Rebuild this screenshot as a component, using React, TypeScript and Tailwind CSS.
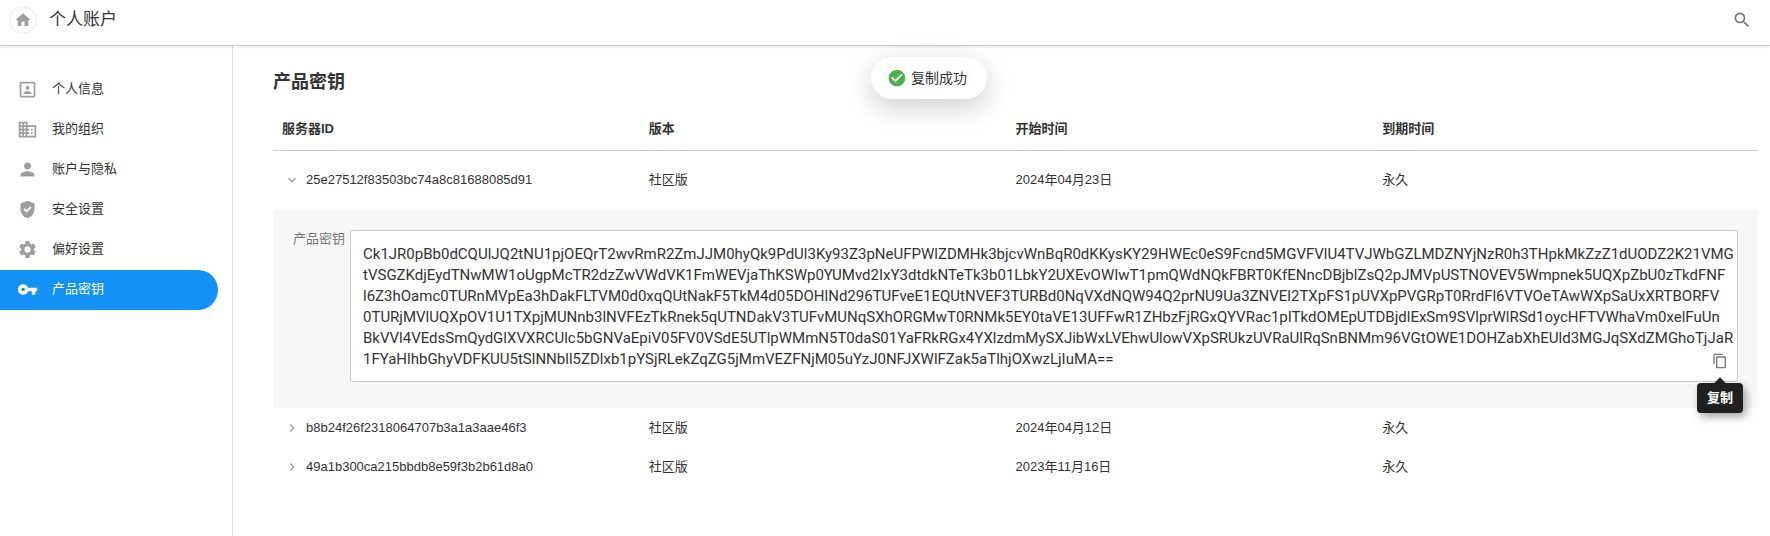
import { Fragment, useState } from "react";
import type { IconType } from "react-icons";
import {
  MdBusiness,
  MdCheckCircle,
  MdContentCopy,
  MdGppGood,
  MdHome,
  MdKeyboardArrowDown,
  MdKeyboardArrowRight,
  MdPerson,
  MdPortrait,
  MdSearch,
  MdSettings,
  MdVpnKey,
} from "react-icons/md";

type NavItem = { label: string; icon: IconType };

const navItems: NavItem[] = [
  { label: "个人信息", icon: MdPortrait },
  { label: "我的组织", icon: MdBusiness },
  { label: "账户与隐私", icon: MdPerson },
  { label: "安全设置", icon: MdGppGood },
  { label: "偏好设置", icon: MdSettings },
  { label: "产品密钥", icon: MdVpnKey },
];

const licenseKey = [
  "Ck1JR0pBb0dCQUlJQ2tNU1pjOEQrT2wvRmR2ZmJJM0hyQk9PdUl3Ky93Z3pNeUFPWlZDMHk3bjcvWnBqR0dKKysKY29HWEc0eS9Fcnd5MGVFVlU4TVJWbGZLMDZNYjNzR0h3THpkMkZzZ1dUODZ2K21VMG",
  "tVSGZKdjEydTNwMW1oUgpMcTR2dzZwVWdVK1FmWEVjaThKSWp0YUMvd2IxY3dtdkNTeTk3b01LbkY2UXEvOWIwT1pmQWdNQkFBRT0KfENncDBjblZsQ2pJMVpUSTNOVEV5Wmpnek5UQXpZbU0zTkdFNF",
  "l6Z3hOamc0TURnMVpEa3hDakFLTVM0d0xqQUtNakF5TkM4d05DOHlNd296TUFveE1EQUtNVEF3TURBd0NqVXdNQW94Q2prNU9Ua3ZNVEl2TXpFS1pUVXpPVGRpT0RrdFl6VTVOeTAwWXpSaUxXRTBORFV",
  "0TURjMVlUQXpOV1U1TXpjMUNnb3lNVFEzTkRnek5qUTNDakV3TUFvMUNqSXhORGMwT0RNMk5EY0taVE13UFFwR1ZHbzFjRGxQYVRac1pITkdOMEpUTDBjdlExSm9SVlprWlRSd1oycHFTVWhaVm0xelFuUn",
  "BkVVl4VEdsSmQydGlXVXRCUlc5bGNVaEpiV05FV0VSdE5UTlpWMmN5T0daS01YaFRkRGx4YXlzdmMySXJibWxLVEhwUlowVXpSRUkzUVRaUlRqSnBNMm96VGtOWE1DOHZabXhEUld3MGJqSXdZMGhoTjJaR",
  "1FYaHlhbGhyVDFKUU5tSlNNbll5ZDlxb1pYSjRLekZqZG5jMmVEZFNjM05uYzJ0NFJXWlFZak5aTlhjOXwzLjIuMA==",
].join("\n");

const servers = [
  { id: "25e27512f83503bc74a8c81688085d91", edition: "社区版", start: "2024年04月23日", end: "永久" },
  { id: "b8b24f26f2318064707b3a1a3aae46f3", edition: "社区版", start: "2024年04月12日", end: "永久" },
  { id: "49a1b300ca215bbdb8e59f3b2b61d8a0", edition: "社区版", start: "2023年11月16日", end: "永久" },
];

function Header() {
  return (
    <header className="relative flex h-[46px] items-center border-b border-[#d0d0d0] pr-2 pb-[5px] pl-[9px] shadow-[0_1px_2px_rgba(0,0,0,0.12)]">
      <a
        href="#home"
        aria-label="首页"
        className="flex size-7 items-center justify-center rounded-full border border-[#eaeaea] text-[#9e9e9e]"
      >
        <MdHome size={18} />
      </a>
      <h1 className="ml-3 text-[17px] leading-6">个人账户</h1>
      <button type="button" aria-label="搜索" className="mr-[10px] ml-auto text-[#757575]">
        <MdSearch size={20} />
      </button>
    </header>
  );
}

function Sidebar() {
  return (
    <nav className="w-[233px] shrink-0 border-r border-[#e0e0e0] pt-6 pr-[14px]">
      {navItems.map(({ label, icon: Icon }) => {
        const active = label === "产品密钥";
        return (
          <a
            key={label}
            href="#account"
            aria-current={active ? "page" : undefined}
            className={
              active
                ? "flex h-10 items-center gap-[14px] rounded-r-full bg-[#1292f7] pb-[2px] pl-[17px] text-white"
                : "flex h-10 items-center gap-[14px] pb-[2px] pl-[17px]"
            }
          >
            <Icon size={21} className={active ? "text-white" : "text-[#9e9e9e]"} />
            {label}
          </a>
        );
      })}
    </nav>
  );
}

function KeyPanel() {
  return (
    <div className="flex items-start gap-[5px] bg-[#f7f7f7] px-5 pt-5 pb-[26px]">
      <label htmlFor="license-key" className="shrink-0 leading-[18px] text-[#757575]">
        产品密钥
      </label>
      <div className="relative flex min-w-0 flex-1">
        <textarea
          id="license-key"
          readOnly
          rows={6}
          wrap="off"
          value={licenseKey}
          className="w-full resize-none overflow-hidden rounded-[3px] border border-[#cccccc] bg-white px-3 pt-[13px] pb-[11px] font-['Roboto',sans-serif] text-[15px] leading-[21px] text-[#333333] outline-none"
        />
        <div className="absolute right-[9px] bottom-[12px] flex size-[18px] items-center justify-center">
          <button type="button" aria-label="复制密钥" className="text-[#757575]">
            <MdContentCopy size={16} />
          </button>
          <div
            role="tooltip"
            className="absolute top-full left-1/2 mt-[13px] -translate-x-1/2 rounded bg-[#212121] px-[10px] py-[6px] leading-[18px] font-bold whitespace-nowrap text-white shadow-[3px_4px_8px_rgba(0,0,0,0.35)]"
          >
            <span className="absolute -top-1 left-1/2 size-2 -translate-x-1/2 rotate-45 bg-[#212121]" />
            <span className="relative">复制</span>
          </div>
        </div>
      </div>
    </div>
  );
}

function ServerTable() {
  const [openId, setOpenId] = useState<string | null>(servers[0].id);
  return (
    <table className="mt-3 w-full table-fixed border-collapse text-left">
      <colgroup>
        <col className="w-[25.3%]" />
        <col className="w-[24.7%]" />
        <col className="w-[24.7%]" />
        <col />
      </colgroup>
      <thead>
        <tr className="h-11 border-b border-[#cccccc]">
          <th className="pt-[2px] pl-[9px] font-bold">服务器ID</th>
          <th className="pt-[2px] font-bold">版本</th>
          <th className="pt-[2px] font-bold">开始时间</th>
          <th className="pt-[2px] font-bold">到期时间</th>
        </tr>
      </thead>
      <tbody>
        {servers.map((server) => {
          const open = server.id === openId;
          const Chevron = open ? MdKeyboardArrowDown : MdKeyboardArrowRight;
          return (
            <Fragment key={server.id}>
              <tr className={open ? "h-[60px]" : "h-[39px]"}>
                <td className="pl-[11px]">
                  <button
                    type="button"
                    aria-expanded={open}
                    onClick={() => setOpenId(open ? null : server.id)}
                    className="flex items-center gap-[6px]"
                  >
                    <Chevron size={16} className="text-[#9e9e9e]" />
                    {server.id}
                  </button>
                </td>
                <td>{server.edition}</td>
                <td>{server.start}</td>
                <td>{server.end}</td>
              </tr>
              {open && (
                <tr>
                  <td colSpan={4}>
                    <KeyPanel />
                  </td>
                </tr>
              )}
            </Fragment>
          );
        })}
      </tbody>
    </table>
  );
}

export default function App() {
  return (
    <div className="relative flex min-h-screen flex-col bg-white font-['Liberation_Sans','Noto_Sans_CJK_SC',sans-serif] text-[13px] leading-[18px] text-[#333333]">
      <Header />
      <div className="flex flex-1">
        <Sidebar />
        <main className="min-w-0 flex-1 pt-6 pr-3 pl-10">
          <h2 className="text-[18px] leading-6 font-bold">产品密钥</h2>
          <ServerTable />
        </main>
      </div>
      <div
        role="status"
        className="absolute top-[57px] left-[calc(50%+44px)] flex h-[42px] -translate-x-1/2 items-center gap-1 rounded-full bg-white pr-5 pl-4 text-[14px] whitespace-nowrap shadow-[0_8px_28px_rgba(0,0,0,0.2)]"
      >
        <MdCheckCircle size={20} className="text-[#4caf50]" />
        复制成功
      </div>
    </div>
  );
}
